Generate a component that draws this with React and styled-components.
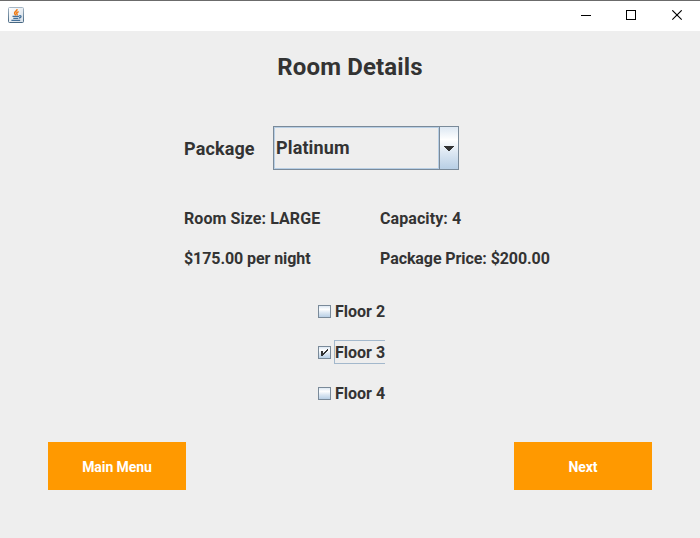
import React, { useState } from "react";
import styled, { createGlobalStyle } from "styled-components";

const Global = createGlobalStyle`
  * { box-sizing: border-box; }
  body { margin: 0; background: #eee; font-family: Roboto, "Liberation Sans", sans-serif; color: #333; }
`;

const oceanGradient = "linear-gradient(#dde8f3 0%, #fff 30%, #dde8f3 60%, #b8cfe5 100%)";

const Window = styled.div`
  width: 700px;
  height: 538px;
  overflow: hidden;
  display: flex;
  flex-direction: column;
  background: #eee;
`;

const TitleBar = styled.header`
  height: 31px;
  flex: none;
  display: flex;
  align-items: flex-start;
  justify-content: space-between;
  background: #fff;
  border-top: 1px solid #6b6b6b;
  padding: 6px 0 0 8px;
`;

const WindowControls = styled.div`
  display: flex;
  padding: 3px 17px 0 0;
  gap: 34px;
  svg { display: block; }
`;

const Content = styled.main`
  flex: 1;
  display: flex;
  flex-direction: column;
`;

const Title = styled.h1`
  margin: 21px 0 0;
  text-align: center;
  font-size: 24px;
  font-weight: 700;
  line-height: 30px;
  letter-spacing: 0.13px;
`;

const PackageRow = styled.div`
  display: flex;
  align-items: center;
  height: 44px;
  margin: 44px 0 0 184px;
  font-size: 18px;
  font-weight: 700;
  letter-spacing: 0.13px;
`;

const PackageLabel = styled.label`
  width: 89px;
`;

const Combo = styled.div`
  display: flex;
  width: 186px;
  height: 44px;
  border: 1px solid #7a8a99;
`;

const ComboValue = styled.div`
  flex: 1;
  display: flex;
  align-items: center;
  border: 1px solid #b8cfe5;
  padding: 0 0 2px 1px;
`;

const ComboArrow = styled.div`
  width: 19px;
  display: flex;
  align-items: center;
  justify-content: center;
  border-left: 1px solid #7a8a99;
  background: ${oceanGradient};
`;

const InfoGrid = styled.div`
  display: grid;
  grid-template-columns: 196px auto;
  grid-auto-rows: 20px;
  row-gap: 20px;
  margin: 39px 0 0 184px;
`;

const Info = styled.span`
  font-size: 16px;
  font-weight: 700;
  line-height: 20px;
  letter-spacing: ${(p) => p.$tracking || 0}px;
  white-space: nowrap;
`;

const FloorList = styled.div`
  display: flex;
  flex-direction: column;
  gap: 17px;
  margin: 30px 0 0 318px;
`;

const FloorOption = styled.div`
  display: flex;
  align-items: center;
  height: 24px;
  cursor: default;
`;

const Box = styled.span`
  width: 13px;
  height: 13px;
  margin: 1px 3px 0 0;
  border: 1px solid #7a8a99;
  background: ${oceanGradient};
  svg { display: block; margin: -1px; }
`;

const FloorLabel = styled.span`
  width: 51px;
  height: 24px;
  border: 1px solid ${(p) => (p.$focused ? "#a3b8cc" : "transparent")};
  border-right: 0;
  font-size: 16px;
  font-weight: 700;
  line-height: 23px;
  white-space: nowrap;
`;

const Actions = styled.footer`
  display: flex;
  justify-content: space-between;
  margin: 37px 48px 0;
`;

const ActionButton = styled.button`
  width: 138px;
  height: 48px;
  border: 0;
  padding: 2px 0 0;
  background: #ff9900;
  color: #fff;
  font: 700 14px Roboto, "Liberation Sans", sans-serif;
  letter-spacing: -0.06px;
`;

const JavaIcon = () => (
  <svg width="16" height="16" viewBox="0 0 16 16">
    <defs>
      <linearGradient id="frame" x1="0" y1="0" x2="0" y2="1">
        <stop offset="0" stopColor="#a5b6c5" />
        <stop offset="1" stopColor="#466782" />
      </linearGradient>
      <linearGradient id="face" x1="0" y1="0" x2="1" y2="1">
        <stop offset="0" stopColor="#fff" />
        <stop offset="1" stopColor="#d5dee7" />
      </linearGradient>
    </defs>
    <rect x=".5" y=".5" width="15" height="15" rx="1" fill="url(#face)" stroke="url(#frame)" />
    <path d="M9 2.2C9.4 4 6.2 4.6 6.6 6.2 6.8 7 7.6 7.5 7.3 8.4M10.7 4.6C8.7 5.4 8.2 6 9 6.9c.4.5.1 1-.4 1.4" fill="none" stroke="#f07a14" strokeWidth="1.5" />
    <path d="M4.5 9.4h6.6M5.3 11.4h5M11.2 8.8c2.4-.7 2.6 1.6-.2 2.2M3.4 13.3h8.8" fill="none" stroke="#45719a" strokeWidth="1.3" />
  </svg>
);

const Floor = ({ name, checked, focused, onToggle }) => (
  <FloorOption role="checkbox" aria-checked={checked} onClick={onToggle}>
    <Box>
      {checked && (
        <svg width="13" height="13" fill="#333" shapeRendering="crispEdges">
          <path d="M3 5h2v5h-2zM9 3h1v2h-1zM8 4h1v2h-1zM7 5h1v2h-1zM6 6h1v2h-1zM5 7h1v2h-1z" />
        </svg>
      )}
    </Box>
    <FloorLabel $focused={focused}>{name}</FloorLabel>
  </FloorOption>
);

export default function App() {
  const [selected, setSelected] = useState("Floor 3");
  return (
    <Window>
      <Global />
      <TitleBar>
        <JavaIcon />
        <WindowControls>
          <svg width="10" height="11" shapeRendering="crispEdges"><path d="M0 5h10v1H0z" /></svg>
          <svg width="12" height="11" shapeRendering="crispEdges"><path d="M1.5.5h9v9h-9z" fill="none" stroke="#000" /></svg>
          <svg width="12" height="11"><path d="M1.3.3l9.4 9.4M10.7.3L1.3 9.7" fill="none" stroke="#000" strokeWidth="1.1" /></svg>
        </WindowControls>
      </TitleBar>
      <Content>
        <Title>Room Details</Title>
        <PackageRow>
          <PackageLabel>Package</PackageLabel>
          <Combo>
            <ComboValue>Platinum</ComboValue>
            <ComboArrow>
              <svg width="10" height="5" fill="#333" shapeRendering="crispEdges">
                <path d="M0 0h10v1H0zM1 1h8v1H1zM2 2h6v1H2zM3 3h4v1H3zM4 4h2v1H4z" />
              </svg>
            </ComboArrow>
          </Combo>
        </PackageRow>
        <InfoGrid>
          <Info $tracking={0.07}>Room Size: LARGE</Info>
          <Info $tracking={0.08}>Capacity: 4</Info>
          <Info $tracking={-0.08}>$175.00 per night</Info>
          <Info $tracking={-0.08}>Package Price: $200.00</Info>
        </InfoGrid>
        <FloorList>
          {["Floor 2", "Floor 3", "Floor 4"].map((name) => (
            <Floor
              key={name}
              name={name}
              checked={selected === name}
              focused={selected === name}
              onToggle={() => setSelected(name)}
            />
          ))}
        </FloorList>
        <Actions>
          <ActionButton>Main Menu</ActionButton>
          <ActionButton>Next</ActionButton>
        </Actions>
      </Content>
    </Window>
  );
}
